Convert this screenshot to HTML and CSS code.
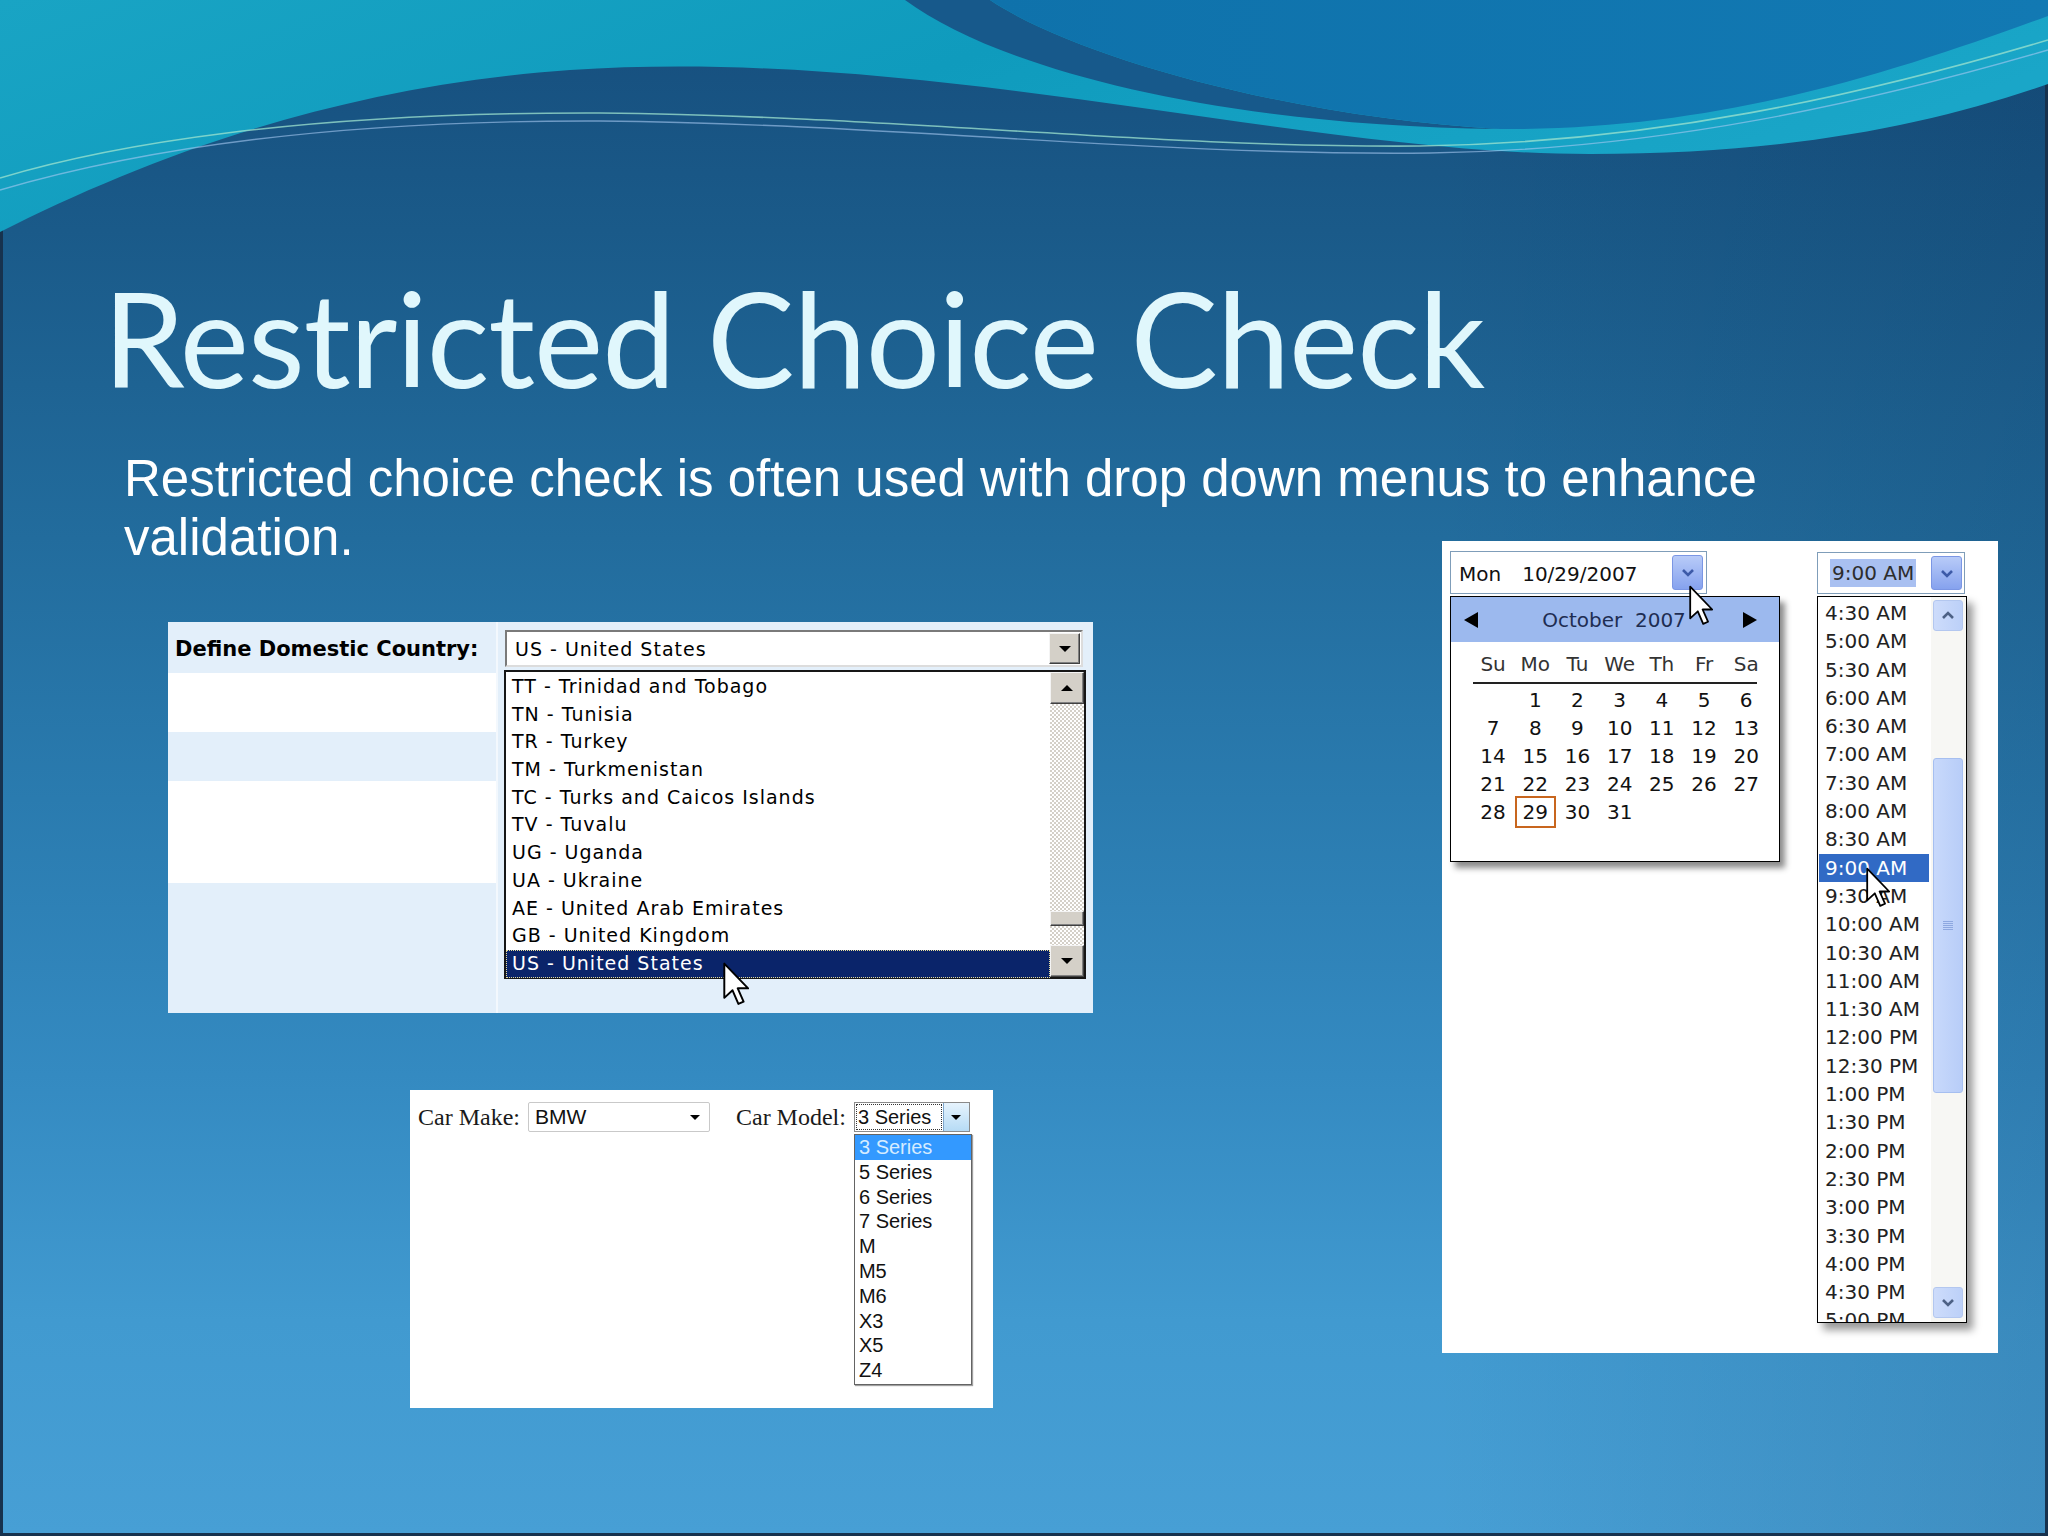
FILE: index.html
```html
<!DOCTYPE html>
<html lang="en">
<head>
<meta charset="utf-8">
<title>Restricted Choice Check</title>
<link rel="stylesheet" href="styles.css">
</head>
<body>
<div class="slide">
  <svg class="waves" width="2048" height="320" viewBox="0 0 2048 320" aria-hidden="true">
    <defs>
      <linearGradient id="cy" x1="0" y1="0" x2="1" y2="0.3">
        <stop offset="0" stop-color="#19a4c4"/>
        <stop offset="0.5" stop-color="#0f9bbd"/>
        <stop offset="1" stop-color="#1aa6c8"/>
      </linearGradient>
      <linearGradient id="md" x1="0" y1="0" x2="1" y2="0">
        <stop offset="0" stop-color="#0f72ab"/>
        <stop offset="1" stop-color="#1279b3"/>
      </linearGradient>
    </defs>
    <path d="M0,0 H2048 V84 C1930,125 1790,154 1590,154 C1300,154 930,46 570,70 C340,86 150,156 0,232 Z" fill="url(#cy)"/>
    <path d="M905,0 C1000,70 1220,126 1500,129 C1300,118 1080,60 990,0 Z" fill="#17598b"/>
    <path d="M990,0 C1080,60 1300,118 1500,129 C1720,131 1900,70 2048,16 V0 Z" fill="url(#md)"/>
    <path d="M0,178 C110,145 300,112 600,113 C900,116 1150,148 1420,146 C1650,143 1860,96 2048,40" stroke="#9fe4cf" stroke-width="1.6" fill="none" opacity="0.75"/>
    <path d="M0,190 C130,152 320,120 600,121 C900,124 1150,156 1430,153 C1660,150 1870,102 2048,50" stroke="#a9c9f2" stroke-width="1.4" fill="none" opacity="0.6"/>
  </svg>

  <div class="content">
    <h1 class="title">Restricted Choice Check</h1>
    <p class="lead">Restricted choice check is often used with drop down menus to enhance<br>validation.</p>

    <div class="stage">
      <div class="left-col">
        <div class="country">
          <div class="country-labels">
            <div class="stripe blue h1"><span class="field-label">Define Domestic Country:</span></div>
            <div class="stripe white h2"></div>
            <div class="stripe blue h3"></div>
            <div class="stripe white h4"></div>
            <div class="stripe blue h5"></div>
          </div>
          <div class="country-sep"></div>
          <div class="country-field">
            <div class="combo">
              <span class="combo-text">US - United States</span>
              <span class="btn3d"><span class="tri-down"></span></span>
            </div>
            <div class="listbox">
              <div class="list-items">
                <div class="list-item">TT - Trinidad and Tobago</div>
                <div class="list-item">TN - Tunisia</div>
                <div class="list-item">TR - Turkey</div>
                <div class="list-item">TM - Turkmenistan</div>
                <div class="list-item">TC - Turks and Caicos Islands</div>
                <div class="list-item">TV - Tuvalu</div>
                <div class="list-item">UG - Uganda</div>
                <div class="list-item">UA - Ukraine</div>
                <div class="list-item">AE - United Arab Emirates</div>
                <div class="list-item">GB - United Kingdom</div>
                <div class="list-item sel">US - United States</div>
              </div>
              <div class="vscroll">
                <span class="sbtn"><span class="tri-up"></span></span>
                <span class="track-a"></span>
                <span class="sthumb"></span>
                <span class="track-b"></span>
                <span class="sbtn"><span class="tri-down"></span></span>
              </div>
            </div>
          </div>
          <svg class="cursor c1" width="26" height="44" viewBox="0 0 12 20" aria-hidden="true"><path d="M0.6,0.6 L0.6,16.4 L4.4,12.9 L7.1,19.2 L9.5,18.1 L6.8,12 L11.6,12 Z" fill="#fff" stroke="#000" stroke-width="0.9" stroke-linejoin="round"/></svg>
        </div>

        <div class="car">
          <span class="car-label">Car Make:</span>
          <span class="car-select"><span class="car-text">BMW</span><span class="car-arrow"></span></span>
          <span class="car-label second">Car Model:</span>
          <span class="model">
            <span class="model-text">3 Series</span>
            <span class="model-btn"><span class="car-arrow"></span></span>
            <span class="model-list">
              <span class="model-item sel">3 Series</span>
              <span class="model-item">5 Series</span>
              <span class="model-item">6 Series</span>
              <span class="model-item">7 Series</span>
              <span class="model-item">M</span>
              <span class="model-item">M5</span>
              <span class="model-item">M6</span>
              <span class="model-item">X3</span>
              <span class="model-item">X5</span>
              <span class="model-item">Z4</span>
            </span>
          </span>
        </div>
      </div>

      <div class="right-col">
        <div class="calshot">
          <div class="date-col">
            <div class="date-input">
              <span class="dow">Mon</span><span>10/29/2007</span>
              <span class="dd-btn"><svg width="14" height="9" viewBox="0 0 14 9"><path d="M2 2 L7 7 L12 2" stroke="#3d5aa8" stroke-width="2.6" fill="none"/></svg></span>
            </div>
            <div class="cal">
              <div class="cal-head">
                <svg width="18" height="18" viewBox="0 0 18 18"><polygon points="16,1 16,17 2,9" fill="#000"/></svg>
                <span class="cal-title">October&nbsp;&nbsp;2007</span>
                <svg width="16" height="18" viewBox="0 0 16 18"><polygon points="1,1 1,17 15,9" fill="#000"/></svg>
              </div>
              <div class="cal-dow">
                <span>Su</span><span>Mo</span><span>Tu</span><span>We</span><span>Th</span><span>Fr</span><span>Sa</span>
              </div>
              <div class="rule"></div>
              <div class="cal-days">
                <span></span><span>1</span><span>2</span><span>3</span><span>4</span><span>5</span><span>6</span>
                <span>7</span><span>8</span><span>9</span><span>10</span><span>11</span><span>12</span><span>13</span>
                <span>14</span><span>15</span><span>16</span><span>17</span><span>18</span><span>19</span><span>20</span>
                <span>21</span><span>22</span><span>23</span><span>24</span><span>25</span><span>26</span><span>27</span>
                <span>28</span><span><span class="today">29</span></span><span>30</span><span>31</span><span></span><span></span><span></span>
              </div>
            </div>
          </div>
          <div class="time-col">
            <div class="time-input">
              <span class="time-sel">9:00 AM</span>
              <span class="dd-btn small"><svg width="14" height="9" viewBox="0 0 14 9"><path d="M2 2 L7 7 L12 2" stroke="#3d5aa8" stroke-width="2.6" fill="none"/></svg></span>
            </div>
            <div class="time-list">
              <div class="times">
                <div class="t">4:30 AM</div>
                <div class="t">5:00 AM</div>
                <div class="t">5:30 AM</div>
                <div class="t">6:00 AM</div>
                <div class="t">6:30 AM</div>
                <div class="t">7:00 AM</div>
                <div class="t">7:30 AM</div>
                <div class="t">8:00 AM</div>
                <div class="t">8:30 AM</div>
                <div class="t sel">9:00 AM</div>
                <div class="t">9:30 AM</div>
                <div class="t">10:00 AM</div>
                <div class="t">10:30 AM</div>
                <div class="t">11:00 AM</div>
                <div class="t">11:30 AM</div>
                <div class="t">12:00 PM</div>
                <div class="t">12:30 PM</div>
                <div class="t">1:00 PM</div>
                <div class="t">1:30 PM</div>
                <div class="t">2:00 PM</div>
                <div class="t">2:30 PM</div>
                <div class="t">3:00 PM</div>
                <div class="t">3:30 PM</div>
                <div class="t">4:00 PM</div>
                <div class="t">4:30 PM</div>
                <div class="t">5:00 PM</div>
              </div>
              <div class="tscroll">
                <span class="xbtn up"><svg width="14" height="9" viewBox="0 0 14 9"><path d="M2 7 L7 2 L12 7" stroke="#4d6185" stroke-width="2.6" fill="none"/></svg></span>
                <span class="tgap"></span>
                <span class="xthumb"><span class="grip"></span></span>
                <span class="tfill"></span>
                <span class="xbtn down"><svg width="14" height="9" viewBox="0 0 14 9"><path d="M2 2 L7 7 L12 2" stroke="#4d6185" stroke-width="2.6" fill="none"/></svg></span>
              </div>
            </div>
          </div>
          <svg class="cursor c2" width="24" height="41" viewBox="0 0 12 20" aria-hidden="true"><path d="M0.6,0.6 L0.6,16.4 L4.4,12.9 L7.1,19.2 L9.5,18.1 L6.8,12 L11.6,12 Z" fill="#fff" stroke="#000" stroke-width="0.9" stroke-linejoin="round"/></svg>
          <svg class="cursor c3" width="24" height="41" viewBox="0 0 12 20" aria-hidden="true"><path d="M0.6,0.6 L0.6,16.4 L4.4,12.9 L7.1,19.2 L9.5,18.1 L6.8,12 L11.6,12 Z" fill="#fff" stroke="#000" stroke-width="0.9" stroke-linejoin="round"/></svg>
        </div>
      </div>
    </div>
  </div>
</div>
</body>
</html>
```

FILE: styles.css
```css
html, body {
  margin: 0;
  padding: 0;
}

.slide {
  width: 2048px;
  height: 1536px;
  position: relative;
  overflow: hidden;
  font-family: "Liberation Sans", Arial, sans-serif;
  background:
    linear-gradient(90deg, rgba(0, 20, 50, 0) 70%, rgba(0, 20, 50, 0.12) 100%),
    linear-gradient(180deg, #164e7d 0%, #1a5a89 15%, #226c9d 35%, #2a7baf 52%, #348ac1 70%, #419ad0 86%, #479fd5 100%);
  box-shadow: inset 3px 0 0 #17324e, inset -3px 0 0 #17324e, inset 0 -3px 0 #17324e;
}

.waves {
  position: absolute;
  left: 0;
  top: 0;
  z-index: 0;
}

.content {
  position: relative;
  z-index: 1;
  padding-top: 272px;
}

.title {
  margin: 0 0 0 103px;
  font-family: Lato, "Open Sans", sans-serif;
  font-weight: 400;
  font-size: 131px;
  line-height: 131px;
  letter-spacing: -1px;
  color: #e0f7fc;
  white-space: nowrap;
}

.lead {
  margin: 46px 0 0 124px;
  font-family: "Liberation Sans", Arial, sans-serif;
  font-size: 51px;
  line-height: 59px;
  color: #ffffff;
  white-space: nowrap;
}

.stage {
  display: flex;
  align-items: flex-start;
  margin-top: 55px;
}

.left-col {
  margin-left: 168px;
  width: 925px;
  display: flex;
  flex-direction: column;
}

/* ---------- Country panel ---------- */
.country {
  position: relative;
  width: 925px;
  height: 391px;
  display: flex;
  background: #e3effa;
}

.country-labels {
  width: 328px;
  display: flex;
  flex-direction: column;
}

.stripe.blue { background: #e3effa; }
.stripe.white { background: #ffffff; }
.stripe.h1 { height: 51px; }
.stripe.h2 { height: 59px; }
.stripe.h3 { height: 49px; }
.stripe.h4 { height: 102px; }
.stripe.h5 { height: 130px; }

.field-label {
  display: block;
  padding: 2px 0 0 7px;
  font-family: "DejaVu Sans", Verdana, sans-serif;
  font-weight: 700;
  font-size: 21px;
  line-height: 51px;
  color: #000;
  white-space: nowrap;
}

.country-sep {
  width: 2px;
  background: #f3f8fd;
}

.country-field {
  width: 595px;
  padding: 8px 0 0 7px;
  box-sizing: border-box;
}

.combo {
  width: 578px;
  height: 37px;
  box-sizing: border-box;
  border: 2px solid;
  border-color: #7a7a7a #dcdcdc #dcdcdc #7a7a7a;
  background: #fff;
  display: flex;
  align-items: center;
}

.combo-text {
  flex: 1;
  padding-left: 8px;
  font-family: "DejaVu Sans", Verdana, sans-serif;
  font-size: 19px;
  letter-spacing: 1px;
  color: #000;
}

.btn3d {
  width: 31px;
  height: 31px;
  box-sizing: border-box;
  background: #d4d0c8;
  border: 1px solid;
  border-color: #f4f4f4 #404040 #404040 #f4f4f4;
  box-shadow: inset -1px -1px 0 #808080;
  display: flex;
  align-items: center;
  justify-content: center;
  margin-right: 1px;
}

.tri-down {
  width: 0;
  height: 0;
  border-left: 6px solid transparent;
  border-right: 6px solid transparent;
  border-top: 6px solid #000;
}

.tri-up {
  width: 0;
  height: 0;
  border-left: 6px solid transparent;
  border-right: 6px solid transparent;
  border-bottom: 6px solid #000;
}

.listbox {
  margin: 3px 0 0 -1px;
  width: 582px;
  height: 309px;
  box-sizing: border-box;
  border: 2px solid #161616;
  background: #fff;
  display: flex;
}

.list-items {
  flex: 1;
  padding-top: 1px;
}

.list-item {
  height: 27.7px;
  line-height: 27.7px;
  padding-left: 6px;
  font-family: "DejaVu Sans", Verdana, sans-serif;
  font-size: 19px;
  letter-spacing: 1px;
  color: #000;
  white-space: nowrap;
}

.list-item.sel {
  background: #0a246a;
  color: #fff;
  outline: 1px dotted #e6dc9a;
  outline-offset: -1px;
}

.vscroll {
  width: 34px;
  display: flex;
  flex-direction: column;
  background: repeating-conic-gradient(#d4d0c8 0% 25%, #ffffff 0% 50%) 0 0 / 4px 4px;
}

.sbtn {
  height: 32px;
  box-sizing: border-box;
  background: #d4d0c8;
  border: 1px solid;
  border-color: #f4f4f4 #404040 #404040 #f4f4f4;
  box-shadow: inset -1px -1px 0 #808080;
  display: flex;
  align-items: center;
  justify-content: center;
}

.track-a { height: 207px; }
.sthumb {
  height: 15px;
  box-sizing: border-box;
  background: #d4d0c8;
  border: 1px solid;
  border-color: #f4f4f4 #404040 #404040 #f4f4f4;
  box-shadow: inset -1px -1px 0 #808080;
}
.track-b { flex: 1; }

/* ---------- Cursors ---------- */
.cursor {
  position: absolute;
  z-index: 5;
}
.c1 { left: 555px; top: 340px; }
.c2 { left: 247px; top: 44px; }
.c3 { left: 424px; top: 326px; }

/* ---------- Car panel ---------- */
.car {
  margin: 77px 0 0 242px;
  width: 583px;
  height: 318px;
  box-sizing: border-box;
  padding: 12px 0 0 8px;
  background: #fff;
  display: flex;
  align-items: flex-start;
  font-family: "Liberation Serif", "Times New Roman", serif;
}

.car-label {
  font-size: 24px;
  line-height: 30px;
  color: #1a1a1a;
  white-space: nowrap;
}

.car-label.second {
  margin-left: 26px;
}

.car-select {
  margin-left: 8px;
  width: 182px;
  height: 30px;
  box-sizing: border-box;
  border: 1px solid #c9c9c9;
  border-radius: 2px;
  display: flex;
  align-items: center;
  padding: 0 9px 0 6px;
  font-family: "Liberation Sans", Arial, sans-serif;
  font-size: 21px;
  color: #111;
}

.car-text { flex: 1; }

.car-arrow {
  width: 0;
  height: 0;
  border-left: 5px solid transparent;
  border-right: 5px solid transparent;
  border-top: 5px solid #000;
}

.model {
  position: relative;
  margin-left: 8px;
  width: 116px;
  height: 30px;
  box-sizing: border-box;
  border: 1px solid #8a8a8a;
  display: flex;
  font-family: "Liberation Sans", Arial, sans-serif;
}

.model-text {
  width: 88px;
  box-sizing: border-box;
  outline: 1px dotted #333;
  outline-offset: -2px;
  padding-left: 3px;
  font-size: 20px;
  line-height: 28px;
  color: #111;
  white-space: nowrap;
}

.model-btn {
  flex: 1;
  border-left: 1px solid #7fa7cc;
  background: linear-gradient(#e6f3fd, #b6dbf5);
  display: flex;
  align-items: center;
  justify-content: center;
}

.model-list {
  position: absolute;
  left: -1px;
  top: 31px;
  width: 118px;
  height: 251px;
  box-sizing: border-box;
  border: 1px solid #646464;
  background: #fff;
  box-shadow: 1px 1px 1px #a0a0a0;
  display: flex;
  flex-direction: column;
}

.model-item {
  display: block;
  height: 24.8px;
  line-height: 24.8px;
  padding-left: 4px;
  font-size: 20px;
  color: #111;
  white-space: nowrap;
}

.model-item.sel {
  background: #3399ff;
  color: #d6ecff;
}

/* ---------- Calendar / time panel ---------- */
.right-col {
  margin-left: 349px;
  margin-top: -81px;
}

.calshot {
  position: relative;
  width: 556px;
  height: 812px;
  box-sizing: border-box;
  padding: 10px 0 0 8px;
  background: #fff;
  display: flex;
  align-items: flex-start;
  font-family: "DejaVu Sans", Verdana, sans-serif;
  font-size: 20px;
  color: #111;
}

.date-col {
  width: 330px;
}

.date-input {
  width: 257px;
  height: 43px;
  box-sizing: border-box;
  border: 1px solid #7f9db9;
  display: flex;
  align-items: center;
  padding: 2px 0 0 8px;
  white-space: nowrap;
}

.dow { margin-right: 21px; }

.dd-btn {
  margin-left: auto;
  margin-right: 3px;
  margin-top: -2px;
  width: 31px;
  height: 35px;
  box-sizing: border-box;
  border: 1px solid #7b96e4;
  border-radius: 3px;
  background: linear-gradient(#b8cbf8, #86a2ee);
  display: flex;
  align-items: center;
  justify-content: center;
}

.dd-btn.small {
  margin-right: 2px;
  margin-top: 0;
  height: 34px;
}

.cal {
  margin-top: 2px;
  width: 330px;
  height: 266px;
  box-sizing: border-box;
  border: 1px solid #000;
  background: #fff;
  box-shadow: 5px 6px 6px rgba(0, 0, 0, 0.45);
}

.cal-head {
  height: 45px;
  background: #9cb9ee;
  display: flex;
  align-items: center;
  padding: 0 21px 0 11px;
}

.cal-title {
  flex: 1;
  text-align: center;
  padding-left: 6px;
  color: #1e2d52;
  white-space: nowrap;
}

.cal-dow {
  display: grid;
  grid-template-columns: repeat(7, 42.2px);
  height: 40px;
  padding: 4px 0 0 21px;
  box-sizing: border-box;
  align-items: center;
  text-align: center;
  color: #333;
}

.rule {
  width: 284px;
  height: 2px;
  margin-left: 22px;
  background: #222;
}

.cal-days {
  display: grid;
  grid-template-columns: repeat(7, 42.2px);
  grid-auto-rows: 28px;
  margin-top: 2px;
  padding-left: 21px;
  align-items: center;
  text-align: center;
  line-height: 28px;
  color: #111;
}

.today {
  display: inline-block;
  width: 37px;
  height: 28px;
  line-height: 28px;
  margin: -2px 0;
  border: 2px solid #c8661e;
  vertical-align: top;
}

.time-col {
  margin-left: 37px;
  margin-top: 1px;
}

.time-input {
  width: 148px;
  height: 42px;
  box-sizing: border-box;
  border: 1px solid #7f9db9;
  display: flex;
  align-items: center;
  padding-left: 12px;
}

.time-sel {
  background: #a9c0f1;
  color: #2d2d2d;
  padding: 1px 2px;
  line-height: 26px;
  white-space: nowrap;
}

.time-list {
  margin-top: 2px;
  width: 150px;
  height: 727px;
  box-sizing: border-box;
  border: 1px solid #000;
  background: #fff;
  display: flex;
  box-shadow: 6px 7px 8px rgba(0, 0, 0, 0.4);
}

.times {
  width: 113px;
  overflow: hidden;
  padding-top: 2px;
}

.t {
  height: 28.3px;
  line-height: 28.3px;
  padding-left: 7px;
  color: #222;
  white-space: nowrap;
}

.t.sel {
  margin-left: 1px;
  width: 110px;
  box-sizing: border-box;
  padding-left: 6px;
  background: #316ac5;
  color: #fff;
}

.tscroll {
  width: 35px;
  background: #f7f7f4;
  display: flex;
  flex-direction: column;
}

.xbtn {
  width: 30px;
  height: 31px;
  margin-left: 2px;
  box-sizing: border-box;
  border: 1px solid #b3c7ef;
  border-radius: 3px;
  background: linear-gradient(90deg, #cddcfb, #bcd0f8);
  display: flex;
  align-items: center;
  justify-content: center;
}

.xbtn.up { margin-top: 3px; }
.xbtn.down { margin-bottom: 4px; }

.tgap { height: 127px; }

.xthumb {
  width: 30px;
  height: 335px;
  margin-left: 2px;
  box-sizing: border-box;
  border: 1px solid #a6bff0;
  border-radius: 3px;
  background: linear-gradient(90deg, #c8d9fb, #b8cdf8);
  display: flex;
  align-items: center;
  justify-content: center;
}

.grip {
  width: 10px;
  height: 9px;
  background: repeating-linear-gradient(180deg, #8ea8e0 0 1px, transparent 1px 2px);
}

.tfill { flex: 1; }
```
